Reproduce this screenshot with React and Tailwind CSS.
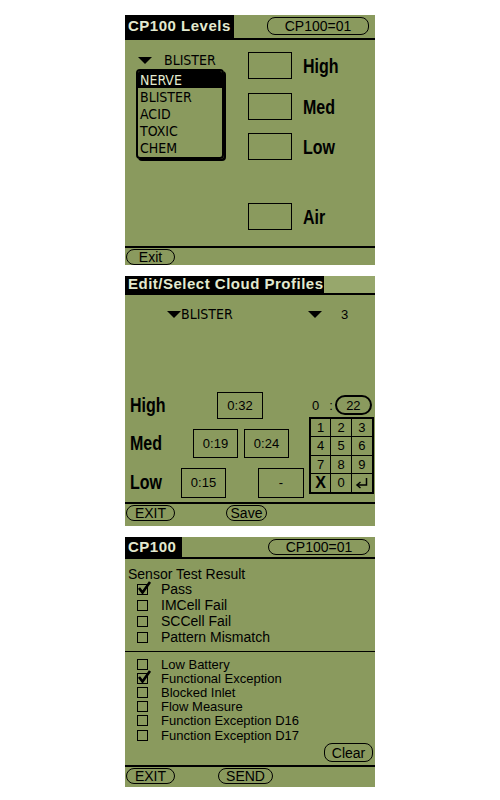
import React from "react";

const sans = "font-['Liberation_Sans','Arial',sans-serif]";
const narrow = "font-['Liberation_Sans_Narrow','DejaVu_Sans_Condensed','Liberation_Sans',sans-serif]";

const PalmBtn = ({ children, className = "" }) => (
  <div
    className={`flex items-center justify-center border-[1.5px] border-black rounded-[8px] text-[14px] leading-none text-black ${sans} ${className}`}
  >
    {children}
  </div>
);

const Tri = ({ className = "" }) => (
  <span
    className={`inline-block w-0 h-0 border-l-[7px] border-r-[7px] border-t-[7px] border-l-transparent border-r-transparent border-t-black ${className}`}
  />
);

const Box = ({ children, className = "" }) => (
  <div
    className={`flex items-center justify-center border-[1.5px] border-black text-[13px] text-black ${sans} ${className}`}
  >
    {children}
  </div>
);

const Big = ({ children, className = "" }) => (
  <span
    className={`inline-block origin-left scale-x-[0.8] text-[20px] font-bold leading-none text-black ${sans} ${className}`}
  >
    {children}
  </span>
);

const Check = ({ checked, label, className = "", text = "text-[14px]" }) => (
  <div className={`flex items-center ${className}`}>
    <div className="relative ml-[12px] w-[11px] h-[11px] border-[1.5px] border-black shrink-0">
      {checked && (
        <svg
          className="absolute -top-[5px] -left-[1px]"
          width="16"
          height="16"
          viewBox="0 0 16 16"
        >
          <path d="M2 8 L5.5 12.5 L13 2" stroke="#000" strokeWidth="2.6" fill="none" />
        </svg>
      )}
    </div>
    <span className={`ml-[13px] ${text} leading-none text-black ${sans}`}>{label}</span>
  </div>
);

const LevelsScreen = () => (
  <div className="w-[250px] h-[250px] bg-[#8a9a5e] flex flex-col">
    <div className="flex h-[25px] border-b-2 border-black shrink-0">
      <div className={`bg-black text-[#e3e9cf] font-bold text-[15px] tracking-[0.5px] px-[3px] flex items-center h-full ${sans}`}>
        CP100 Levels
      </div>
      <PalmBtn className="ml-auto mr-[6px] mt-[2px] w-[102px] h-[18px]">CP100=01</PalmBtn>
    </div>
    <div className="flex flex-1">
      <div className="ml-[11px] w-[90px] flex flex-col pt-[13px]">
        <div className="flex items-center h-[14px]">
          <Tri className="ml-[2px]" />
          <span className={`ml-[12px] text-[14px] leading-none text-black ${narrow}`}>BLISTER</span>
        </div>
        <div className="mt-[2px] w-[88px] h-[90px] border-2 border-black rounded-[4px] shadow-[2px_2px_0_#000] flex flex-col overflow-hidden">
          {["NERVE", "BLISTER", "ACID", "TOXIC", "CHEM"].map((t, i) => (
            <div
              key={t}
              className={`h-[17px] flex items-center px-[2px] text-[14px] leading-none ${narrow} ${
                i === 0 ? "bg-black text-[#e3e9cf]" : "text-black"
              }`}
            >
              {t}
            </div>
          ))}
        </div>
      </div>
      <div className="ml-[22px] flex flex-col pt-[12px]">
        {[
          ["High", "mt-0"],
          ["Med", "mt-[14px]"],
          ["Low", "mt-[13px]"],
          ["Air", "mt-[43px]"],
        ].map(([t, m]) => (
          <div key={t} className={`flex items-center ${m}`}>
            <Box className="w-[44px] h-[27px]" />
            <Big className="ml-[11px]">{t}</Big>
          </div>
        ))}
      </div>
    </div>
    <div className="border-t-2 border-black h-[19px] shrink-0 flex items-start">
      <PalmBtn className="ml-[1px] mt-[1px] w-[49px] h-[16px]">Exit</PalmBtn>
    </div>
  </div>
);

const Enter = () => (
  <svg width="14" height="12" viewBox="0 0 14 12">
    <path d="M11.5 1 V8 H2.5" stroke="#000" strokeWidth="1.5" fill="none" />
    <path d="M5.5 5 L2 8 L5.5 11" stroke="#000" strokeWidth="1.5" fill="none" />
  </svg>
);

const ProfilesScreen = () => (
  <div className="w-[250px] h-[250px] bg-[#8a9a5e] flex flex-col">
    <div className="flex h-[19px] border-b-2 border-black shrink-0">
      <div className={`bg-black text-[#e3e9cf] font-bold text-[15px] tracking-[0.5px] w-[199px] px-[3px] flex items-center h-full whitespace-nowrap overflow-hidden ${sans}`}>
        Edit/Select Cloud Profiles
      </div>
      <div className="flex-1 bg-[#97a76c]" />
    </div>
    <div className="flex flex-col flex-1">
      <div className="flex items-center h-[16px] mt-[11px]">
        <div className="flex items-center ml-[42px] w-[141px]">
          <Tri />
          <span className={`text-[14px] leading-none text-black ${narrow}`}>BLISTER</span>
        </div>
        <Tri />
        <span className={`ml-[19px] text-[13px] leading-none text-black ${sans}`}>3</span>
      </div>
      <div className="flex mt-[70px]">
        <div className="w-[184px] flex flex-col">
          <div className="flex items-center h-[27px]">
            <div className="w-[55px] pl-[5px]"><Big>High</Big></div>
            <Box className="ml-[37px] w-[46px] h-[27px]">0:32</Box>
          </div>
          <div className="flex items-center h-[29px] mt-[10px]">
            <div className="w-[55px] pl-[5px]"><Big>Med</Big></div>
            <Box className="ml-[13px] w-[45px] h-[29px]">0:19</Box>
            <Box className="ml-[6px] w-[45px] h-[29px]">0:24</Box>
          </div>
          <div className="flex items-center h-[30px] mt-[10px]">
            <div className="w-[55px] pl-[5px]"><Big>Low</Big></div>
            <Box className="ml-[1px] w-[45px] h-[30px]">0:15</Box>
            <Box className="ml-[32px] w-[46px] h-[30px]">-</Box>
          </div>
        </div>
        <div className="flex flex-col pt-[3px]">
          <div className={`flex items-center h-[20px] text-[13px] leading-none text-black ${sans}`}>
            <span className="ml-[3px]">0</span>
            <span className="ml-[10px]">:</span>
            <div className="ml-[2px] w-[37px] h-[20px] border-2 border-black rounded-full flex items-center justify-center">
              22
            </div>
          </div>
          <div className="mt-[2px] w-[65px] h-[77px] border-2 border-black grid grid-cols-3 grid-rows-4">
            {["1", "2", "3", "4", "5", "6", "7", "8", "9", "X", "0", "E"].map((k, i) => (
              <div
                key={k}
                className={`flex items-center justify-center text-[13px] leading-none text-black ${sans} ${
                  i % 3 !== 2 ? "border-r border-black" : ""
                } ${i < 9 ? "border-b border-black" : ""} ${k === "X" ? "font-bold text-[16px]" : ""}`}
              >
                {k === "E" ? <Enter /> : k}
              </div>
            ))}
          </div>
        </div>
      </div>
    </div>
    <div className="border-t-2 border-black h-[24px] shrink-0 flex items-start">
      <PalmBtn className="ml-[1px] mt-[1px] w-[49px] h-[16px]">EXIT</PalmBtn>
      <PalmBtn className="ml-[51px] mt-[1px] w-[41px] h-[16px]">Save</PalmBtn>
    </div>
  </div>
);

const TestScreen = () => (
  <div className="w-[250px] h-[250px] bg-[#8a9a5e] flex flex-col">
    <div className="flex h-[22px] border-b-2 border-black shrink-0">
      <div className={`bg-black text-[#e3e9cf] font-bold text-[15px] tracking-[0.5px] w-[57px] px-[3px] flex items-center h-full ${sans}`}>
        CP100
      </div>
      <PalmBtn className="ml-auto mr-[5px] mt-[2px] w-[102px] h-[16px]">CP100=01</PalmBtn>
    </div>
    <div className="flex flex-col flex-1">
      <div className={`mt-[8px] h-[14px] pl-[3px] text-[14px] leading-[14px] text-black ${sans}`}>
        Sensor Test Result
      </div>
      <Check checked label="Pass" className="h-[16px]" />
      <Check label="IMCell Fail" className="h-[16px]" />
      <Check label="SCCell Fail" className="h-[16px]" />
      <Check label="Pattern Mismatch" className="h-[16px]" />
      <div className="mt-[6px] border-t-[1.5px] border-black" />
      <div className="mt-[5px] flex flex-col">
        {[
          ["Low Battery", false],
          ["Functional Exception", true],
          ["Blocked Inlet", false],
          ["Flow Measure", false],
          ["Function Exception D16", false],
          ["Function Exception D17", false],
        ].map(([t, c]) => (
          <Check key={t} checked={c} label={t} className="h-[14.2px]" text="text-[13px]" />
        ))}
      </div>
      <div className="flex justify-end">
        <PalmBtn className="mr-[2px] mt-[1px] w-[49px] h-[19px]">Clear</PalmBtn>
      </div>
    </div>
    <div className="border-t-2 border-black h-[22px] shrink-0 flex items-start">
      <PalmBtn className="ml-[1px] mt-[1px] w-[49px] h-[16px]">EXIT</PalmBtn>
      <PalmBtn className="ml-[43px] mt-[1px] w-[55px] h-[16px]">SEND</PalmBtn>
    </div>
  </div>
);

export default function App() {
  return (
    <div className="w-[500px] h-[800px] bg-white flex flex-col items-center pt-[15px] gap-[11px]">
      <LevelsScreen />
      <ProfilesScreen />
      <TestScreen />
    </div>
  );
}
